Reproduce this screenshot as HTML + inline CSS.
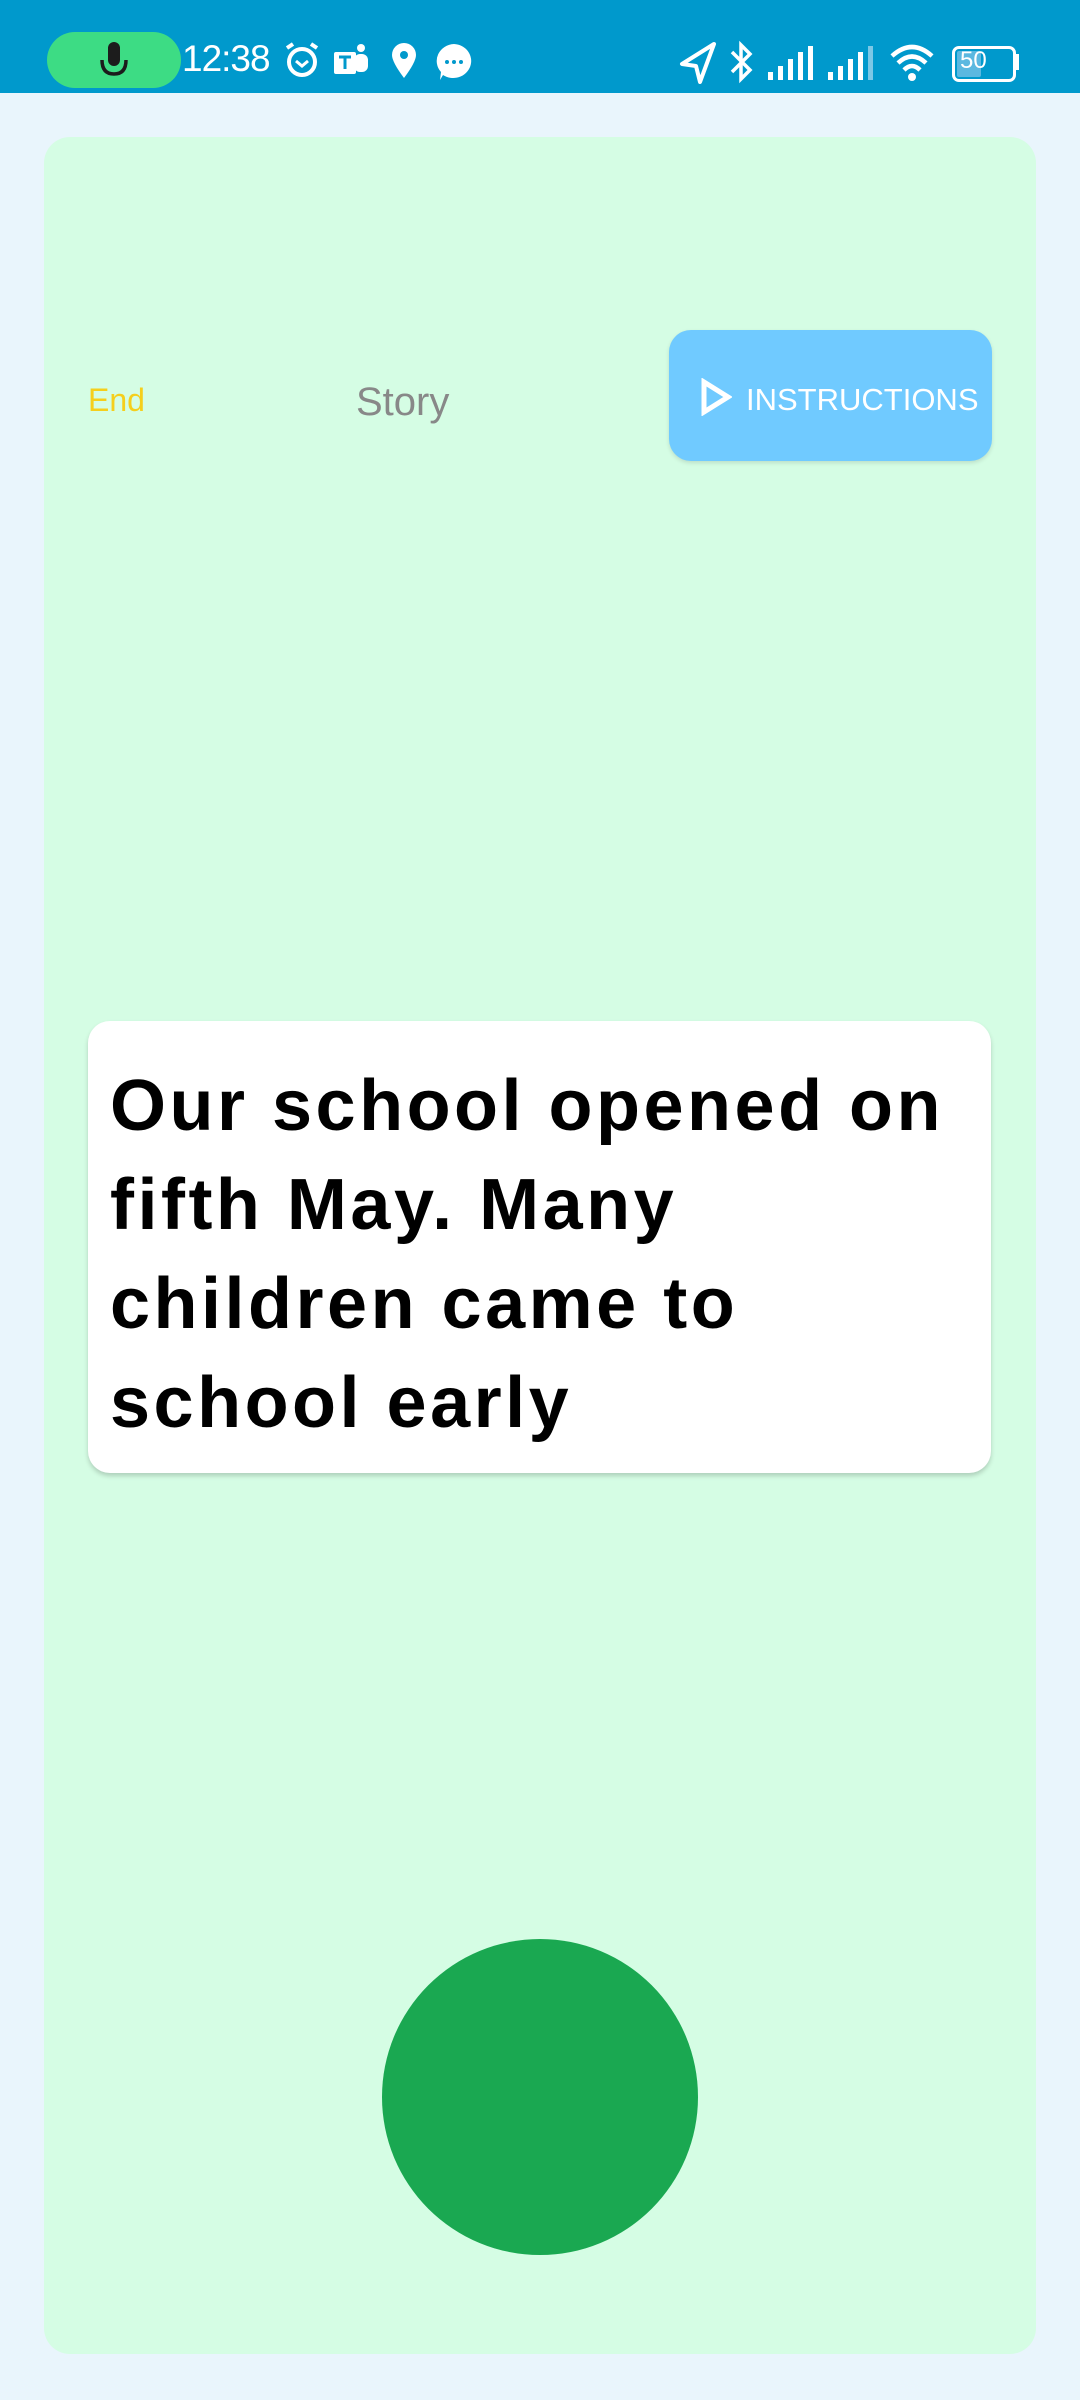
<!DOCTYPE html>
<html><head><meta charset="utf-8"><style>
html,body{margin:0;padding:0;}
body{width:1080px;height:2400px;background:#e9f5fc;position:relative;overflow:hidden;font-family:"Liberation Sans",sans-serif;}
.sb{position:absolute;left:0;top:0;width:1080px;height:93px;background:#0099cc;}
.card{position:absolute;left:44px;top:137px;width:992px;height:2217px;background:#d5fde4;border-radius:26px;}
.abs{position:absolute;}
</style></head><body>
<div class="sb">
  <div class="abs" style="left:47px;top:32px;width:134px;height:56px;border-radius:28px;background:#3ddc84;"></div>
  <svg class="abs" style="left:96px;top:40px" width="36" height="42" viewBox="0 0 36 42">
    <rect x="12" y="2" width="12" height="24" rx="6" fill="#1c1c1c"/>
    <path d="M6 20 Q6 34 18 34 Q30 34 30 20" stroke="#1c1c1c" stroke-width="3.5" fill="none"/>
  </svg>
  <div class="abs" style="left:182px;top:38px;font-size:37px;color:#fff;letter-spacing:-1px;">12:38</div>
  <svg class="abs" style="left:282px;top:40px" width="40" height="40" viewBox="0 0 40 40"><circle cx="20" cy="22" r="13" stroke="#fff" stroke-width="4" fill="none"/><path d="M14 21l6 5 6-5" stroke="#fff" stroke-width="3" fill="none"/><path d="M5 8l6-4M35 8l-6-4" stroke="#fff" stroke-width="4"/></svg>
  <svg class="abs" style="left:332px;top:42px" width="40" height="40" viewBox="0 0 40 40"><circle cx="29" cy="6" r="4" fill="#fff"/><rect x="22" y="12" width="14" height="18" rx="6" fill="#fff"/><rect x="2" y="10" width="22" height="22" rx="2" fill="#fff"/><path d="M7 15h12M13 15v12" stroke="#0099cc" stroke-width="3"/></svg>
  <svg class="abs" style="left:390px;top:42px" width="28" height="38" viewBox="0 0 28 38"><path d="M14 36 Q2 20 2 13 A12 12 0 0 1 26 13 Q26 20 14 36Z" fill="#fff"/><circle cx="14" cy="13" r="4" fill="#0099cc"/></svg>
  <svg class="abs" style="left:434px;top:42px" width="40" height="40" viewBox="0 0 40 40"><path d="M20 2A18 17 0 1 1 9 33L6 38 7 30A18 17 0 0 1 20 2Z" fill="#fff"/><circle cx="13" cy="20" r="2" fill="#0099cc"/><circle cx="20" cy="20" r="2" fill="#0099cc"/><circle cx="27" cy="20" r="2" fill="#0099cc"/></svg>
  <svg class="abs" style="left:678px;top:40px" width="40" height="44" viewBox="0 0 40 44"><path d="M36 4L4 24 18 26 22 42Z" stroke="#fff" stroke-width="4" fill="none" stroke-linejoin="round"/></svg>
  <svg class="abs" style="left:728px;top:40px" width="28" height="44" viewBox="0 0 28 44"><path d="M4 12L22 30 13 39V5l9 9L4 32" stroke="#fff" stroke-width="3.5" fill="none"/></svg>
  <svg class="abs" style="left:768px;top:46px" width="48" height="34" viewBox="0 0 48 34"><rect x="0" y="26" width="5" height="8" fill="#fff"/><rect x="10" y="20" width="5" height="14" fill="#fff"/><rect x="20" y="13" width="5" height="21" fill="#fff"/><rect x="30" y="6" width="5" height="28" fill="#fff"/><rect x="40" y="0" width="5" height="34" fill="#fff"/></svg>
  <svg class="abs" style="left:828px;top:46px" width="48" height="34" viewBox="0 0 48 34"><rect x="0" y="26" width="5" height="8" fill="#fff"/><rect x="10" y="20" width="5" height="14" fill="#fff"/><rect x="20" y="13" width="5" height="21" fill="#fff"/><rect x="30" y="6" width="5" height="28" fill="#fff"/><rect x="40" y="0" width="5" height="34" fill="#7cc8e6"/></svg>
  <svg class="abs" style="left:888px;top:42px" width="48" height="40" viewBox="0 0 48 40"><path d="M4 14Q24-4 44 14M10 21Q24 8 38 21M16 28Q24 20 32 28" stroke="#fff" stroke-width="4.5" fill="none"/><circle cx="24" cy="35" r="4" fill="#fff"/></svg>
  <div class="abs" style="left:952px;top:46px;width:58px;height:30px;border:3px solid #fff;border-radius:7px;"></div>
  <div class="abs" style="left:957px;top:51px;width:24px;height:26px;background:#5bb8e0;border-radius:2px;"></div>
  <div class="abs" style="left:1015px;top:54px;width:4px;height:16px;background:#fff;"></div>
  <div class="abs" style="left:960px;top:47px;font-size:24px;color:#fff;">50</div>
</div>
<div class="card"></div>
<div class="abs" style="left:88px;top:382px;font-size:32px;color:#f5cf1c;">End</div>
<div class="abs" style="left:356px;top:380px;font-size:40px;color:#888;">Story</div>
<div class="abs" style="left:669px;top:330px;width:323px;height:131px;background:#70caff;border-radius:22px;box-shadow:0 2px 4px rgba(0,0,0,0.12);"></div>
<svg class="abs" style="left:700px;top:378px" width="32" height="38" viewBox="0 0 32 38"><path d="M4 4L28 19 4 34Z" stroke="#fff" stroke-width="5" fill="none" stroke-linejoin="miter"/></svg>
<div class="abs" style="left:746px;top:382px;font-size:31px;color:#fff;">INSTRUCTIONS</div>
<div class="abs" style="left:88px;top:1021px;width:903px;height:452px;background:#fff;border-radius:22px;box-shadow:0 3px 5px rgba(0,0,0,0.18);"></div>
<div class="abs" style="left:110px;top:1057px;width:880px;font-size:72px;line-height:99px;font-weight:bold;color:#000;letter-spacing:3.5px;">Our school opened on<br>fifth May. Many<br>children came to<br>school early</div>
<div class="abs" style="left:382px;top:1939px;width:316px;height:316px;border-radius:50%;background:#1aa851;"></div>
</body></html>
